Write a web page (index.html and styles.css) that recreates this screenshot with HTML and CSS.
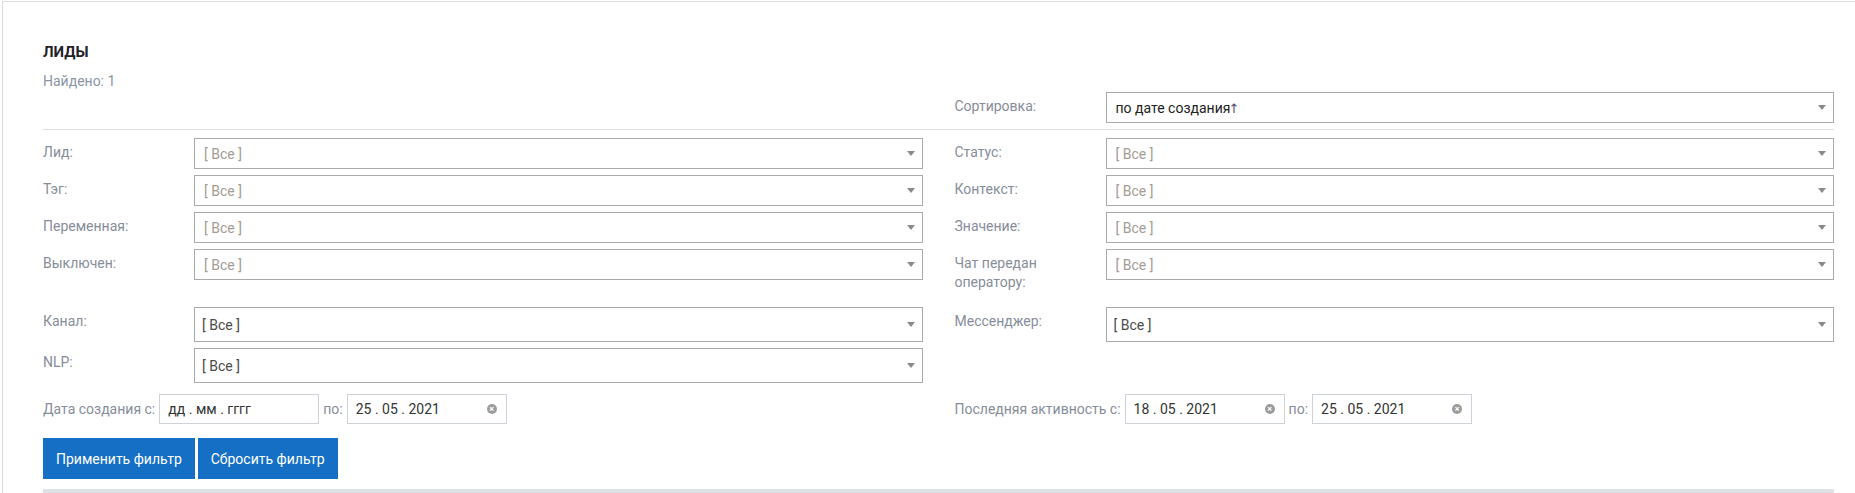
FILE: index.html
```html
<!DOCTYPE html>
<html lang="ru">
<head>
    <meta charset="UTF-8">
    <meta name="viewport" content="width=device-width, initial-scale=1.0">
    <title>Лиды</title>
    <link rel="stylesheet" href="styles.css">
</head>
<body>
    <div class="page">
        <div class="card">
            <h1 class="title">ЛИДЫ</h1>
            <div class="found">Найдено: 1</div>

            <!-- Sorting -->
            <div class="grid sort-row">
                <div></div>
                <div class="field">
                    <label class="label">Сортировка:</label>
                    <div class="select selected"><span>по дате создания<span class="up">↑</span></span><span class="caret"></span></div>
                </div>
            </div>

            <hr class="sep">

            <!-- Filters -->
            <div class="grid filters">
                <div class="field">
                    <label class="label">Лид:</label>
                    <div class="select"><span>[ Все ]</span><span class="caret"></span></div>
                </div>
                <div class="field">
                    <label class="label">Статус:</label>
                    <div class="select"><span>[ Все ]</span><span class="caret"></span></div>
                </div>
                <div class="field">
                    <label class="label">Тэг:</label>
                    <div class="select"><span>[ Все ]</span><span class="caret"></span></div>
                </div>
                <div class="field">
                    <label class="label">Контекст:</label>
                    <div class="select"><span>[ Все ]</span><span class="caret"></span></div>
                </div>
                <div class="field">
                    <label class="label">Переменная:</label>
                    <div class="select"><span>[ Все ]</span><span class="caret"></span></div>
                </div>
                <div class="field">
                    <label class="label">Значение:</label>
                    <div class="select"><span>[ Все ]</span><span class="caret"></span></div>
                </div>
                <div class="field">
                    <label class="label">Выключен:</label>
                    <div class="select"><span>[ Все ]</span><span class="caret"></span></div>
                </div>
                <div class="field">
                    <label class="label wrap">Чат передан оператору:</label>
                    <div class="select"><span>[ Все ]</span><span class="caret"></span></div>
                </div>
            </div>

            <div class="grid filters big">
                <div class="field">
                    <label class="label">Канал:</label>
                    <div class="select"><span>[ Все ]</span><span class="caret"></span></div>
                </div>
                <div class="field">
                    <label class="label">Мессенджер:</label>
                    <div class="select"><span>[ Все ]</span><span class="caret"></span></div>
                </div>
                <div class="field">
                    <label class="label">NLP:</label>
                    <div class="select"><span>[ Все ]</span><span class="caret"></span></div>
                </div>
                <div></div>
            </div>

            <!-- Dates -->
            <div class="grid dates">
                <div class="date-group">
                    <span class="date-label">Дата создания с:</span>
                    <div class="date-input"><span>дд . мм . гггг</span></div>
                    <span class="date-label">по:</span>
                    <div class="date-input"><span>25 . 05 . 2021</span><span class="clear">×</span></div>
                </div>
                <div class="date-group">
                    <span class="date-label">Последняя активность с:</span>
                    <div class="date-input"><span>18 . 05 . 2021</span><span class="clear">×</span></div>
                    <span class="date-label">по:</span>
                    <div class="date-input"><span>25 . 05 . 2021</span><span class="clear">×</span></div>
                </div>
            </div>

            <div class="actions">
                <button class="btn">Применить фильтр</button>
                <button class="btn">Сбросить фильтр</button>
            </div>

            <div class="table-top"></div>
        </div>
    </div>
</body>
</html>
```

FILE: styles.css
```css
* {
    margin: 0;
    padding: 0;
    box-sizing: border-box;
}

html, body {
    height: 100%;
    overflow: hidden;
}

body {
    font-family: Roboto, "Liberation Sans", Arial, sans-serif;
    font-size: 14px;
    color: #333;
    background-color: #fff;
}

.page {
    padding: 1px 0 0 2px;
}

.card {
    border-top: 1px solid #dcdcdc;
    border-left: 1px solid #d8dce1;
    padding: 0 21px 0 40px;
}

.title {
    margin-top: 40px;
    font-size: 15px;
    line-height: 20px;
    font-weight: 700;
    color: #1f2329;
}

.found {
    margin-top: 9px;
    line-height: 20px;
    color: #8c95a5;
}

.grid {
    display: grid;
    grid-template-columns: 1fr 1fr;
    column-gap: 32px;
}

.sort-row {
    margin-top: 1px;
}

.field {
    display: flex;
    align-items: flex-start;
}

.label {
    flex: 0 0 151px;
    padding: 5px 15px 0 0;
    line-height: 19px;
    color: #868d9a;
}

.label.wrap {
    padding-bottom: 9px;
}

.select {
    flex: 1;
    height: 31px;
    display: flex;
    align-items: center;
    justify-content: space-between;
    padding: 0 7px 0 9px;
    border: 1px solid #aaa;
    color: #a39b94;
    background-color: #fff;
}

.select.selected {
    color: #222;
}

.select .up {
    font-family: "DejaVu Sans", sans-serif;
    font-size: 13px;
    margin-left: -2px;
    color: #5b4a6e;
}

.caret {
    width: 0;
    height: 0;
    border-left: 4px solid transparent;
    border-right: 4px solid transparent;
    border-top: 5px solid #8a8a8a;
}

.sep {
    border: none;
    border-top: 1px solid #dedede;
    margin: 6px 0 8px;
}

.filters {
    row-gap: 6px;
}

.filters.big {
    margin-top: 6px;
}

.filters.big .select {
    height: 35px;
    padding-left: 7px;
    color: #4a4a4a;
}

.dates {
    margin-top: 11px;
}

.date-group {
    display: flex;
    align-items: center;
    gap: 4px;
}

.date-label {
    color: #868d9a;
}

.date-input {
    width: 160px;
    height: 30px;
    display: flex;
    align-items: center;
    justify-content: space-between;
    padding: 0 9px 0 8px;
    border: 1px solid #cdd2d9;
    color: #333;
}

.clear {
    width: 10px;
    height: 10px;
    border-radius: 50%;
    background-color: #9b9b9b;
    color: #fff;
    font-size: 9px;
    line-height: 10px;
    text-align: center;
    font-weight: 700;
}

.actions {
    display: flex;
    gap: 3px;
    margin-top: 14px;
}

.btn {
    height: 41px;
    padding: 0 13px;
    border: none;
    background-color: #1570c5;
    color: #fff;
    font-family: inherit;
    font-size: 14px;
    cursor: pointer;
}

.btn:hover {
    background-color: #125fa8;
}

.table-top {
    margin-top: 10px;
    height: 6px;
    background-color: #dee1e5;
}
```
